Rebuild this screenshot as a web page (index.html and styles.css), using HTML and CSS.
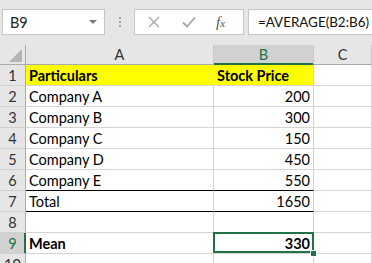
FILE: index.html
```html
<!DOCTYPE html>
<html>
<head>
<meta charset="utf-8">
<link rel="stylesheet" href="styles.css">
</head>
<body>
<div class="app">
  <div class="fbar">
    <div class="namebox"><span class="ref">B9</span><span class="caret"></span></div>
    <div class="dots"><i></i><i></i><i></i></div>
    <div class="btns">
      <svg class="ico-x" width="12" height="12" viewBox="0 0 12 12"><path d="M1 1 L11 11 M11 1 L1 11" stroke="#a6a6a6" stroke-width="1.3" fill="none"/></svg>
      <svg class="ico-ok" width="14" height="12" viewBox="0 0 14 12"><path d="M1 6.5 L5 10.5 L13 1.5" stroke="#a6a6a6" stroke-width="1.8" fill="none"/></svg>
      <span class="fx">f<small>x</small></span>
    </div>
    <div class="formula">=AVERAGE(B2:B6)</div>
  </div>
  <div class="sheet">
    <div class="h corner"><svg width="13" height="13" viewBox="0 0 13 13"><path d="M13 0 L13 13 L0 13 Z" fill="#b4b4b4"/></svg></div>
    <div class="h col">A</div>
    <div class="h col sel">B</div>
    <div class="h col">C</div>

    <div class="h row">1</div>
    <div class="c fill bold">Particulars</div>
    <div class="c fill bold">Stock Price</div>
    <div class="c"></div>

    <div class="h row">2</div>
    <div class="c">Company A</div>
    <div class="c num">200</div>
    <div class="c"></div>

    <div class="h row">3</div>
    <div class="c">Company B</div>
    <div class="c num">300</div>
    <div class="c"></div>

    <div class="h row">4</div>
    <div class="c">Company C</div>
    <div class="c num">150</div>
    <div class="c"></div>

    <div class="h row">5</div>
    <div class="c">Company D</div>
    <div class="c num">450</div>
    <div class="c"></div>

    <div class="h row">6</div>
    <div class="c bb">Company E</div>
    <div class="c num bb">550</div>
    <div class="c"></div>

    <div class="h row">7</div>
    <div class="c bb">Total</div>
    <div class="c num bb">1650</div>
    <div class="c"></div>

    <div class="h row">8</div>
    <div class="c"></div>
    <div class="c"></div>
    <div class="c"></div>

    <div class="h row sel">9</div>
    <div class="c bold">Mean</div>
    <div class="c num bold active">330</div>
    <div class="c"></div>

    <div class="h row">10</div>
    <div class="c"></div>
    <div class="c"></div>
    <div class="c"></div>
  </div>
</div>
</body>
</html>
```
FILE: styles.css
```css
html, body {
  margin: 0;
  padding: 0;
}
body {
  width: 372px;
  height: 263px;
  overflow: hidden;
  background: #e6e6e6;
  font-family: "Lato", "Liberation Sans", sans-serif;
  font-size: 14.5px;
  color: #000;
}
.app {
  display: flex;
  flex-direction: column;
}
.fbar {
  height: 45px;
  box-sizing: border-box;
  padding: 9px 0 0 2px;
  display: flex;
  align-items: flex-start;
}
.fbar > * {
  flex-shrink: 0;
}
.namebox {
  width: 103px;
  height: 26px;
  box-sizing: border-box;
  background: #fff;
  border: 1px solid #c6c6c6;
  display: flex;
  align-items: center;
  justify-content: space-between;
  padding: 0 7px 0 7px;
}
.ref {
  color: #222;
}
.caret {
  width: 0;
  height: 0;
  border-left: 4px solid transparent;
  border-right: 4px solid transparent;
  border-top: 4px solid #7a7a7a;
}
.dots {
  width: 29px;
  height: 26px;
  display: flex;
  flex-direction: column;
  align-items: center;
  justify-content: center;
  gap: 2px;
}
.dots i {
  width: 2px;
  height: 2px;
  background: #a0a0a0;
}
.btns {
  width: 110px;
  height: 26px;
  box-sizing: border-box;
  background: #fff;
  border: 1px solid #c6c6c6;
  display: flex;
  align-items: center;
  padding-left: 13px;
}
.ico-x {
  margin-right: 22px;
}
.ico-ok {
  margin-right: 20px;
}
.fx {
  font-family: "Liberation Serif", serif;
  font-style: italic;
  font-size: 15px;
  color: #555;
}
.fx small {
  font-size: 11px;
}
.formula {
  flex: 1 1 auto;
  min-width: 0;
  height: 26px;
  box-sizing: border-box;
  margin-left: 4px;
  background: #fff;
  border: 1px solid #c6c6c6;
  border-right: none;
  padding-left: 9px;
  font-size: 13.4px;
  line-height: 24px;
  white-space: nowrap;
  overflow: hidden;
  color: #111;
}
.sheet {
  display: grid;
  grid-template-columns: 26px 188px 100px 58px;
  grid-template-rows: 20px;
  grid-auto-rows: 21px;
}
.sheet > div {
  box-sizing: border-box;
  border-right: 1px solid #d4d4d4;
  border-bottom: 1px solid #d4d4d4;
  white-space: nowrap;
}
.h {
  background: #e6e6e6;
  color: #333;
  display: flex;
  align-items: center;
  justify-content: center;
}
.h.col {
  border-bottom-color: #ababab;
  border-right-color: #c8c8c8;
}
.h.corner {
  border-bottom-color: #ababab;
  border-right-color: #ababab;
  align-items: flex-end;
  justify-content: flex-end;
  padding: 0 3px 2px 0;
}
.h.row {
  border-right-color: #ababab;
  border-bottom-color: #d0d0d0;
  align-items: flex-start;
  padding-top: 2px;
}
.h.sel {
  background: #d2d2d2;
  color: #217346;
}
.h.col.sel {
  border-bottom-color: #217346;
  box-shadow: inset 0 -1px 0 #217346;
}
.h.row.sel {
  border-right-color: #217346;
  box-shadow: inset -1px 0 0 #217346;
}
.c {
  background: #fff;
  display: flex;
  align-items: flex-end;
  line-height: 16px;
  padding: 0 3px 1px 3px;
}
.num {
  justify-content: flex-end;
}
.bold {
  font-weight: bold;
}
.fill {
  background: #ffff00;
}
.sheet > .fill:nth-child(6) {
  border-right-color: #ffff00;
}
.sheet > .bb {
  border-bottom-color: #000;
}
.active {
  position: relative;
}
.active::after {
  content: "";
  position: absolute;
  left: -1px;
  top: -1px;
  right: -1px;
  bottom: 0;
  border: 2px solid #217346;
}
.active::before {
  content: "";
  position: absolute;
  right: -4px;
  bottom: -4px;
  width: 5px;
  height: 5px;
  background: #217346;
  border: 1px solid #fff;
  z-index: 2;
}
```
